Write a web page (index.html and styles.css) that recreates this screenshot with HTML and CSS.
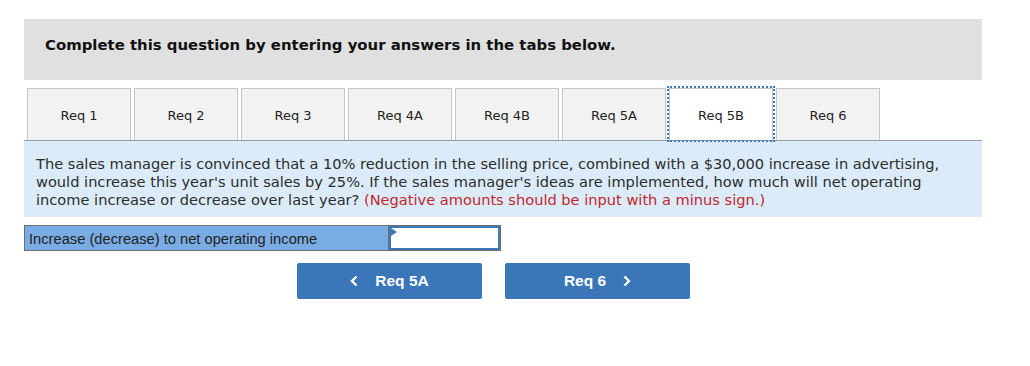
FILE: index.html
```html
<!DOCTYPE html>
<html lang="en">
<head>
    <meta charset="UTF-8">
    <title>Req 5B</title>
    <link rel="stylesheet" href="styles.css">
</head>
<body>
    <div class="question">
        <div class="instructions">
            <p>Complete this question by entering your answers in the tabs below.</p>
        </div>
        <div class="tabs">
            <div class="tab">Req 1</div>
            <div class="tab">Req 2</div>
            <div class="tab">Req 3</div>
            <div class="tab">Req 4A</div>
            <div class="tab">Req 4B</div>
            <div class="tab">Req 5A</div>
            <div class="tab active">Req 5B</div>
            <div class="tab">Req 6</div>
        </div>
        <div class="prompt">
            The sales manager is convinced that a 10% reduction in the selling price, combined with a $30,000 increase in advertising, would increase this year's unit sales by 25%. If the sales manager's ideas are implemented, how much will net operating income increase or decrease over last year? <span class="note">(Negative amounts should be input with a minus sign.)</span>
        </div>
        <div class="answer-row">
            <div class="answer-label">Increase (decrease) to net operating income</div>
            <div class="answer-input"><input type="text"></div>
        </div>
        <div class="nav-buttons">
            <button class="nav-button">
                <svg width="8" height="12" viewBox="0 0 8 12"><polyline points="6.5,1.5 2,6 6.5,10.5" fill="none" stroke="#fff" stroke-width="2.4"/></svg>
                <span>Req 5A</span>
            </button>
            <button class="nav-button">
                <span>Req 6</span>
                <svg width="8" height="12" viewBox="0 0 8 12"><polyline points="1.5,1.5 6,6 1.5,10.5" fill="none" stroke="#fff" stroke-width="2.4"/></svg>
            </button>
        </div>
    </div>
</body>
</html>
```

FILE: styles.css
```css
body {
    margin: 0;
    background-color: #fff;
    font-family: "DejaVu Sans", Verdana, sans-serif;
    color: #222;
}
.question {
    width: 958px;
    margin: 19px 0 0 24px;
}
.instructions {
    background-color: #e0e0e0;
    height: 61px;
    box-sizing: border-box;
    padding: 17px 0 0 21px;
}
.instructions p {
    margin: 0;
    font-size: 14.9px;
    line-height: 18px;
    font-weight: bold;
    color: #111;
}
.tabs {
    display: flex;
    gap: 3px;
    margin-top: 8px;
    padding-left: 3px;
    border-bottom: 1px solid #9a9a9a;
}
.tab {
    width: 104px;
    height: 52px;
    box-sizing: border-box;
    background-color: #f2f2f2;
    border: 1px solid #c6c6c6;
    border-bottom: none;
    display: flex;
    align-items: center;
    justify-content: center;
    padding-top: 2px;
    font-size: 13px;
    color: #222;
}
.tab.active {
    background-color: #fff;
    outline: 2px dotted #3a78c0;
}
.prompt {
    background-color: #dbebf9;
    padding: 14px 12px 8px 12px;
    font-size: 14.6px;
    line-height: 18px;
    color: #2d2d2d;
}
.note {
    color: #c4262e;
}
.answer-row {
    display: flex;
    margin-top: 8px;
    width: 477px;
    height: 26px;
    box-sizing: border-box;
    border: 1px solid #6e6e6e;
}
.answer-label {
    width: 364px;
    box-sizing: border-box;
    background-color: #79ace3;
    border-right: 1px solid #6e6e6e;
    font-family: "Liberation Sans", Arial, sans-serif;
    font-size: 14.7px;
    color: #222;
    padding: 1px 0 0 4px;
    display: flex;
    align-items: center;
}
.answer-input {
    flex: 1;
    position: relative;
}
.answer-input::before {
    content: "";
    position: absolute;
    left: 2px;
    top: 2px;
    border-left: 6px solid #3c78b8;
    border-top: 4px solid transparent;
    border-bottom: 4px solid transparent;
}
.answer-input input {
    width: 100%;
    height: 100%;
    box-sizing: border-box;
    border: 2px solid #3c78b8;
    margin: 0;
    padding: 0 4px;
    outline: none;
}
.nav-buttons {
    display: flex;
    gap: 23px;
    margin-top: 12px;
    padding-left: 273px;
}
.nav-button {
    width: 185px;
    height: 36px;
    background-color: #3a76b8;
    border: none;
    border-radius: 2px;
    color: #fff;
    font-family: "Liberation Sans", Arial, sans-serif;
    font-size: 15.5px;
    font-weight: bold;
    display: flex;
    align-items: center;
    justify-content: center;
    gap: 17px;
    padding: 0;
    cursor: pointer;
}
```
